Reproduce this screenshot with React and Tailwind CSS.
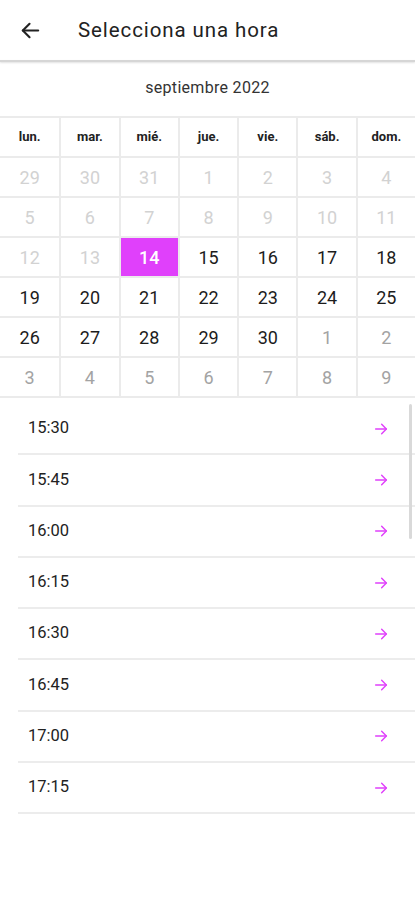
import React from "react";

const weekDays = ["lun.", "mar.", "mié.", "jue.", "vie.", "sáb.", "dom."];

// each cell: [day, kind] kind: "past" | "active" | "next" | "selected"
const weeks = [
  [[29, "past"], [30, "past"], [31, "past"], [1, "past"], [2, "past"], [3, "past"], [4, "past"]],
  [[5, "past"], [6, "past"], [7, "past"], [8, "past"], [9, "past"], [10, "past"], [11, "past"]],
  [[12, "past"], [13, "past"], [14, "selected"], [15, "active"], [16, "active"], [17, "active"], [18, "active"]],
  [[19, "active"], [20, "active"], [21, "active"], [22, "active"], [23, "active"], [24, "active"], [25, "active"]],
  [[26, "active"], [27, "active"], [28, "active"], [29, "active"], [30, "active"], [1, "next"], [2, "next"]],
  [[3, "next"], [4, "next"], [5, "next"], [6, "next"], [7, "next"], [8, "next"], [9, "next"]],
];

const slots = ["15:30", "15:45", "16:00", "16:15", "16:30", "16:45", "17:00", "17:15"];

const dayStyles = {
  past: "text-[#d2d2d2]",
  next: "text-[#a3a3a3]",
  active: "text-[#1c1c1c]",
  selected: "bg-[#e040fb] text-white font-medium",
};

const Arrow = ({ className, size = 18 }) => (
  <svg
    width={size}
    height={size}
    viewBox="0 0 24 24"
    fill="none"
    stroke="currentColor"
    strokeWidth="2.2"
    strokeLinecap="round"
    strokeLinejoin="round"
    className={className}
  >
    <path d="M20 12H4" />
    <path d="M11 5l-7 7 7 7" />
  </svg>
);

const App = () => {
  return (
    <div className="w-[415px] h-[900px] bg-white overflow-hidden font-['Roboto',sans-serif]">
      {/* Header */}
      <div className="h-[60px] flex items-center">
        <Arrow className="ml-[19px] text-[#222]" size={23} />
        <h1 className="ml-[36px] text-[20.5px] text-[#222] tracking-[0.9px]">
          Selecciona una hora
        </h1>
      </div>
      <div className="h-[2px] bg-[#d6d6d6] shadow-[0_1px_2px_rgba(0,0,0,0.12)]" />

      {/* Month */}
      <div className="h-[54px] flex items-center justify-center pb-[2px]">
        <span className="text-[16px] tracking-[0.3px] text-[#333]">septiembre 2022</span>
      </div>

      {/* Calendar grid */}
      <div className="border-t-2 border-[#ebebeb]">
        <div className="grid grid-cols-7 h-[40px] border-b-2 border-[#ebebeb]">
          {weekDays.map((d, i) => (
            <div
              key={d}
              className={`flex items-center justify-center text-[13px] font-bold text-[#222] ${
                i > 0 ? "border-l-2 border-[#ebebeb]" : ""
              }`}
            >
              {d}
            </div>
          ))}
        </div>
        {weeks.map((week, w) => (
          <div
            key={w}
            className="grid grid-cols-7 h-[40px] border-b-2 border-[#ebebeb]"
          >
            {week.map(([day, kind], i) => (
              <div
                key={i}
                className={`flex items-center justify-center text-[18px] ${dayStyles[kind]} ${
                  i > 0 ? "border-l-2 border-[#ebebeb]" : ""
                }`}
              >
                {day}
              </div>
            ))}
          </div>
        ))}
      </div>

      {/* Time slots */}
      <div className="relative mt-[6px]">
        <div className="absolute right-[3px] top-[0px] w-[3px] h-[135px] rounded-full bg-[#d9d9d9]" />
        {slots.map((s) => (
          <div
            key={s}
            className="ml-[18px] h-[51.3px] flex items-center justify-between border-b-2 border-[#ececec]"
          >
            <span className="ml-[10px] text-[16.5px] text-[#222]">{s}</span>
            <Arrow className="mr-[26px] rotate-180 text-[#e040fb]" size={16} />
          </div>
        ))}
      </div>
    </div>
  );
};

export default App;
